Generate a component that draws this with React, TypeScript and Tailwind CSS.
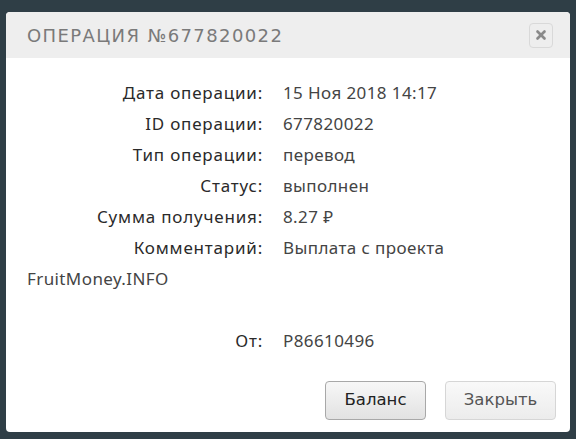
import { X } from "lucide-react";

type Row = { label: string; value: string };

const ROWS: Row[] = [
  { label: "Дата операции:", value: "15 Ноя 2018 14:17" },
  { label: "ID операции:", value: "677820022" },
  { label: "Тип операции:", value: "перевод" },
  { label: "Статус:", value: "выполнен" },
  { label: "Сумма получения:", value: "8.27 ₽" },
  { label: "Комментарий:", value: "Выплата с проекта" },
];

export default function App() {
  return (
    <div className="h-[439px] w-[576px] overflow-hidden bg-[#2f3e46] pl-[6px] pt-[12px]">
      <div className="flex h-[420px] w-[564px] flex-col overflow-hidden rounded-[4px] bg-white">
        <div className="flex h-[46px] items-center justify-between bg-[#eeeeee] pl-[21px] pr-[17px]">
          <h1 className="font-['DejaVu_Sans',sans-serif] text-[18px] tracking-[1.4px] text-[#7a7a7a]">
            ОПЕРАЦИЯ №677820022
          </h1>
          <button className="grid h-[25px] w-[24px] place-items-center rounded-[4px] border border-[#d9d9d9] bg-[#eeeeee]">
            <X size={14} strokeWidth={4.5} className="text-[#8a8a8a]" />
          </button>
        </div>

        <div className="flex-1 pt-[19px] font-['Noto_Sans',sans-serif] text-[17px] tracking-[0.4px] text-[#333]">
          {ROWS.map((r) => (
            <div key={r.label} className="flex h-[31px] items-center">
              <div className="w-[257px] text-right tracking-[0.8px] text-[#2a2a2a]">{r.label}</div>
              <div className="pl-[20px] text-[#444]">{r.value}</div>
            </div>
          ))}
          <div className="flex h-[31px] items-center pl-[21px] text-[#444]">FruitMoney.INFO</div>
          <div className="h-[31px]" />
          <div className="flex h-[31px] items-center">
            <div className="w-[257px] text-right tracking-[0.8px] text-[#2a2a2a]">От:</div>
            <div className="pl-[20px] text-[#444]">P86610496</div>
          </div>
        </div>

        <div className="flex justify-end gap-[19px] pb-[12px] pr-[14px] font-['DejaVu_Sans',sans-serif] text-[16.5px]">
          <button className="h-[39px] w-[101px] rounded-[4px] border border-[#a8a8a8] bg-gradient-to-b from-[#f7f7f7] to-[#e2e2e2] text-[#222]">
            Баланс
          </button>
          <button className="h-[39px] w-[111px] rounded-[4px] border border-[#d6d6d6] bg-gradient-to-b from-[#f9f9f9] to-[#ececec] text-[#555]">
            Закрыть
          </button>
        </div>
      </div>
    </div>
  );
}
